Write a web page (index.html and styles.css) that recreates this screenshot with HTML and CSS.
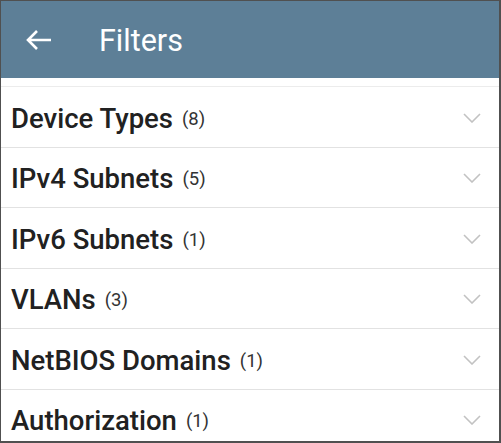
FILE: index.html
```html
<!DOCTYPE html>
<html>
<head>
<meta charset="utf-8">
<link rel="stylesheet" href="styles.css">
</head>
<body>
<div class="frame">
  <header class="appbar">
    <svg class="back" width="26" height="22" viewBox="0 0 26 22"><path d="M25 11H3M11 2L2 11l9 9" fill="none" stroke="#fff" stroke-width="2.6"/></svg>
    <h1 class="title">Filters</h1>
  </header>
  <div class="strip"></div>
  <ul class="list">
    <li class="row"><span class="name">Device Types</span><span class="count">(8)</span><svg class="chev" width="18" height="10" viewBox="0 0 18 10"><path d="M1 1l8 8 8-8" fill="none" stroke="#c2c2c2" stroke-width="1.6"/></svg></li>
    <li class="row"><span class="name">IPv4 Subnets</span><span class="count">(5)</span><svg class="chev" width="18" height="10" viewBox="0 0 18 10"><path d="M1 1l8 8 8-8" fill="none" stroke="#c2c2c2" stroke-width="1.6"/></svg></li>
    <li class="row"><span class="name">IPv6 Subnets</span><span class="count">(1)</span><svg class="chev" width="18" height="10" viewBox="0 0 18 10"><path d="M1 1l8 8 8-8" fill="none" stroke="#c2c2c2" stroke-width="1.6"/></svg></li>
    <li class="row"><span class="name">VLANs</span><span class="count">(3)</span><svg class="chev" width="18" height="10" viewBox="0 0 18 10"><path d="M1 1l8 8 8-8" fill="none" stroke="#c2c2c2" stroke-width="1.6"/></svg></li>
    <li class="row"><span class="name">NetBIOS Domains</span><span class="count">(1)</span><svg class="chev" width="18" height="10" viewBox="0 0 18 10"><path d="M1 1l8 8 8-8" fill="none" stroke="#c2c2c2" stroke-width="1.6"/></svg></li>
    <li class="row"><span class="name">Authorization</span><span class="count">(1)</span><svg class="chev" width="18" height="10" viewBox="0 0 18 10"><path d="M1 1l8 8 8-8" fill="none" stroke="#c2c2c2" stroke-width="1.6"/></svg></li>
  </ul>
</div>
</body>
</html>
```
FILE: styles.css
```css
html, body {
  margin: 0;
  padding: 0;
  background: #fff;
}
.frame {
  box-sizing: border-box;
  width: 501px;
  height: 443px;
  border-style: solid;
  border-color: #505050;
  border-width: 1px 2px 2px 1px;
  overflow: hidden;
  font-family: Roboto, "Liberation Sans", sans-serif;
  background: #fff;
}
.appbar {
  height: 77px;
  background: #5d7f97;
  display: flex;
  align-items: center;
  padding-left: 25px;
}
.back {
  display: block;
  margin-top: 0;
}
.title {
  margin: 0 0 0 47px;
  color: #fff;
  font-size: 30.5px;
  font-weight: 400;
  margin-top: 2px;
}
.strip {
  height: 8px;
  border-bottom: 1px solid #ececec;
}
.list {
  list-style: none;
  margin: 0;
  padding: 0;
}
.row {
  box-sizing: border-box;
  height: 60.5px;
  border-bottom: 1px solid #e2e2e2;
  display: flex;
  align-items: center;
  padding: 0 18px 0 10px;
  color: #212121;
}
.name {
  font-size: 27.5px;
  font-weight: 500;
  margin-top: 3px;
}
.count {
  font-size: 18.5px;
  margin-left: 9px;
  margin-top: 4px;
  color: #333;
}
.chev {
  margin-left: auto;
  display: block;
  margin-top: 2px;
}
```
